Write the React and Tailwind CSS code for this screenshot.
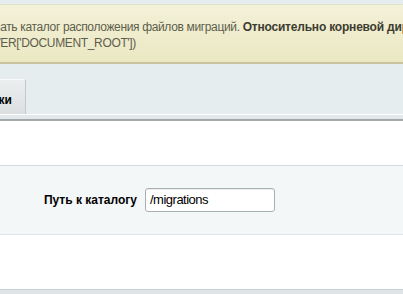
import React from 'react';

const App = () => {
  return (
    <div className="w-[403px] h-[294px] overflow-hidden bg-[#e6edef] font-['Liberation_Sans',Arial,sans-serif] text-[12px]">
      {/* notice */}
      <div className="pt-[4px]">
        <div className="h-[60px] border-t border-[#e4e2c6] border-b-2 border-b-[#c9c49e] bg-gradient-to-b from-[#f3f1d8] to-[#ebe8c3] pt-[14px] overflow-hidden leading-[16px] text-[#5e5d4c] tracking-[-0.35px]">
          <div className="-ml-[22px] whitespace-nowrap">
            указать каталог расположения файлов миграций.{' '}
            <b className="text-[#3d3c30] tracking-[-0.2px]">Относительно корневой директории сайта</b>
          </div>
          <div className="-ml-[47px] whitespace-nowrap">($_SERVER['DOCUMENT_ROOT'])</div>
        </div>
      </div>

      {/* tabs */}
      <div className="pt-[15px] flex">
        <div className="h-[35px] w-[26px] overflow-hidden bg-gradient-to-b from-[#eceff0] to-[#dcdfe0] border-t border-t-[#f7f9f9] border-r border-r-[#c3c9cc] flex items-center justify-end pr-[13px] pt-[5px]">
          <span className="font-bold text-black whitespace-nowrap">Настройки</span>
        </div>
      </div>
      <div className="h-[7px] border-t border-white bg-[#e3e8ea] border-b-2 border-b-[#a3a8aa]" />

      {/* content */}
      <div className="bg-white">
        <div className="h-[44px]" />
        <div className="h-[70px] border-t border-[#d3dbde] border-b border-b-[#dde5e8] bg-[#f4f7f8] flex items-center">
          <div className="w-[137px] text-right font-bold text-black">Путь к каталогу</div>
          <div className="ml-[8px] w-[130px] h-[24px] rounded-[3px] border border-[#a8b0b4] bg-white shadow-[inset_0_1px_1px_rgba(0,0,0,0.08)] flex items-center pl-[4px] text-black text-[13px] tracking-[-0.5px]">
            /migrations
          </div>
        </div>
        <div className="h-[54px]" />
      </div>
      <div className="h-[10px] border-t border-[#c9d1d4] bg-[#dfe5e7]" />
    </div>
  );
};

export default App;
